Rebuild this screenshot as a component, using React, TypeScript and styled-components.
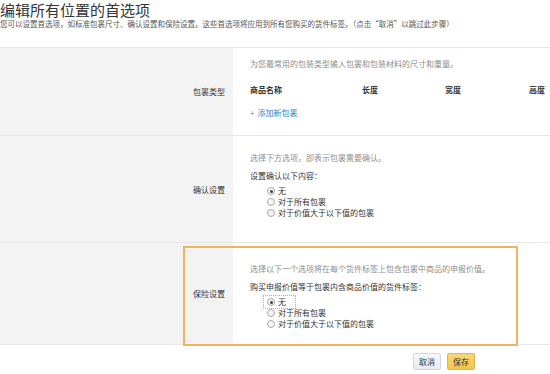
import React, { FC } from 'react';
import styled, { createGlobalStyle } from 'styled-components';

const GlobalStyle = createGlobalStyle`
	html, body {
		margin: 0;
		padding: 0;
		background: #ffffff;
	}
	body {
		font-family: 'Noto Sans CJK SC', 'Noto Sans', sans-serif;
		color: #333333;
	}
`;

const Page = styled.div`
	width: 550px;
	height: 374px;
	overflow: hidden;
`;

const Title = styled.h1`
	margin: 2px 0 0 0;
	font-size: 15px;
	line-height: 16px;
	font-weight: 400;
	color: #333333;
`;

const Subtitle = styled.p`
	margin: 1px 0 0 0;
	font-size: 7.5px;
	line-height: 10px;
	color: #555555;
	white-space: nowrap;
`;

const Table = styled.div`
	margin-top: 18px;
	border-top: 1px solid #e8e8e8;
`;

const Row = styled.div<{ $height: number }>`
	position: relative;
	display: grid;
	grid-template-columns: 233px 1fr;
	height: ${(p) => p.$height}px;
	border-bottom: 1px solid #e6e6e6;
`;

const LabelCell = styled.div`
	background: #f3f3f3;
	display: flex;
	align-items: center;
	justify-content: flex-end;
	padding-right: 8px;
	font-size: 8px;
	color: #333333;
`;

const ContentCell = styled.div<{ $top: number }>`
	padding: ${(p) => p.$top}px 0 0 17px;
	font-size: 8px;
	line-height: 10px;
`;

const Hint = styled.div`
	color: #8e8e8e;
	white-space: nowrap;
`;

const Prompt = styled.div`
	margin-top: 8px;
	color: #333333;
	white-space: nowrap;
`;

const HeaderRow = styled.div`
	display: grid;
	grid-template-columns: 112px 83px 84px auto;
	margin-top: 16px;
	font-weight: 600;
	color: #333333;
`;

const AddLink = styled.a`
	display: block;
	margin-top: 13px;
	color: #2f7fc6;
	text-decoration: none;
	white-space: nowrap;

	span {
		color: #888888;
		margin-right: 3px;
	}
`;

const RadioList = styled.div`
	margin: 5px 0 0 17px;
	display: flex;
	flex-direction: column;
	align-items: flex-start;
	gap: 1px;
`;

const Option = styled.label<{ $focused?: boolean }>`
	display: flex;
	align-items: center;
	gap: 3px;
	padding: 0 8px 0 2px;
	margin-left: -2px;
	outline: ${(p) => (p.$focused ? '1px dotted #e3a443' : 'none')};
	outline-offset: 1px;
	color: #333333;
	white-space: nowrap;
`;

const Radio = styled.span<{ $checked?: boolean }>`
	width: 6px;
	height: 6px;
	border-radius: 50%;
	border: 1px solid #a9a9a9;
	background: #f4f4f4;
	display: flex;
	align-items: center;
	justify-content: center;

	&::after {
		content: '';
		width: 3px;
		height: 3px;
		border-radius: 50%;
		background: ${(p) => (p.$checked ? '#444444' : 'transparent')};
	}
`;

const Highlight = styled.div`
	position: absolute;
	left: 183px;
	top: 3px;
	width: 335px;
	height: 100px;
	box-sizing: border-box;
	border: 2px solid #f2b15c;
	pointer-events: none;
`;

const Footer = styled.div`
	display: flex;
	justify-content: flex-end;
	gap: 6px;
	padding: 8px 75px 0 0;
`;

const Button = styled.button<{ $primary?: boolean }>`
	height: 17px;
	padding: 0 5px;
	font-family: inherit;
	font-size: 8px;
	color: #333333;
	border-radius: 2px;
	border: 1px solid ${(p) => (p.$primary ? '#e2b546' : '#d5d9dd')};
	background: ${(p) =>
		p.$primary
			? 'linear-gradient(#f8d776, #f1c44d)'
			: 'linear-gradient(#f7f8fa, #e9ebee)'};
`;

interface RadioOption {
	text: string;
	checked?: boolean;
	focused?: boolean;
}

const RadioGroup: FC<{ options: RadioOption[] }> = ({ options }) => (
	<RadioList>
		{options.map((o) => (
			<Option key={o.text} $focused={o.focused}>
				<Radio $checked={o.checked} />
				{o.text}
			</Option>
		))}
	</RadioList>
);

export default function App() {
	return (
		<Page>
			<GlobalStyle />
			<Title>编辑所有位置的首选项</Title>
			<Subtitle>
				您可以设置首选项，如标准包裹尺寸、确认设置和保险设置。这些首选项将应用到所有您购买的货件标签。（点击“取消”以跳过此步骤）
			</Subtitle>
			<Table>
				<Row $height={87}>
					<LabelCell>包裹类型</LabelCell>
					<ContentCell $top={11}>
						<Hint>为您最常用的包装类型输入包裹和包装材料的尺寸和重量。</Hint>
						<HeaderRow>
							<span>商品名称</span>
							<span>长度</span>
							<span>宽度</span>
							<span>高度</span>
						</HeaderRow>
						<AddLink>
							<span>+</span>添加新包裹
						</AddLink>
					</ContentCell>
				</Row>
				<Row $height={106}>
					<LabelCell>确认设置</LabelCell>
					<ContentCell $top={17}>
						<Hint>选择下方选项，即表示包裹需要确认。</Hint>
						<Prompt>设置确认以下内容：</Prompt>
						<RadioGroup
							options={[
								{ text: '无', checked: true },
								{ text: '对于所有包裹' },
								{ text: '对于价值大于以下值的包裹' },
							]}
						/>
					</ContentCell>
				</Row>
				<Row $height={101}>
					<LabelCell>保险设置</LabelCell>
					<ContentCell $top={21}>
						<Hint>选择以下一个选项将在每个货件标签上包含包裹中商品的申报价值。</Hint>
						<Prompt>购买申报价值等于包裹内含商品价值的货件标签：</Prompt>
						<RadioGroup
							options={[
								{ text: '无', checked: true, focused: true },
								{ text: '对于所有包裹' },
								{ text: '对于价值大于以下值的包裹' },
							]}
						/>
					</ContentCell>
					<Highlight />
				</Row>
			</Table>
			<Footer>
				<Button>取消</Button>
				<Button $primary>保存</Button>
			</Footer>
		</Page>
	);
}
